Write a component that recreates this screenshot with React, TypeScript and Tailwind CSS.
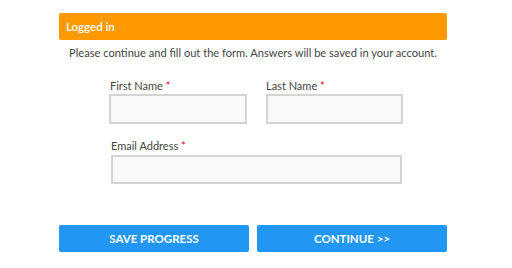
export default function App() {
  return (
    <div className="w-[512px] h-[268px] bg-white pt-[13px] pl-[59px]" style={{ fontFamily: "Lato, 'Open Sans', sans-serif" }}>
      <div className="w-[388px]">
        {/* Status banner */}
        <div className="h-[27px] bg-[#ff9900] rounded-[2px] flex items-center pl-[7px] text-[11.5px] font-semibold text-white">
          Logged in
        </div>
        <p className="mt-[6px] text-center text-[11.1px] leading-[14px] text-[#444]">
          Please continue and fill out the form. Answers will be saved in your account.
        </p>

        {/* Form fields */}
        <div className="ml-[50px] mt-[19px] w-[294px]">
          <div className="flex gap-[19px]">
            <label className="flex flex-col">
              <span className="text-[11px] leading-[14px] text-[#444] pl-[1px]">
                First Name <span className="text-[#e2001a]">*</span>
              </span>
              <input className="mt-[1px] w-[138px] h-[30px] bg-[#f9f9f9] border-2 border-[#d4d4d4]" />
            </label>
            <label className="flex flex-col">
              <span className="text-[11px] leading-[14px] text-[#444]">
                Last Name <span className="text-[#e2001a]">*</span>
              </span>
              <input className="mt-[1px] w-[137px] h-[30px] bg-[#f9f9f9] border-2 border-[#d4d4d4]" />
            </label>
          </div>
          <label className="flex flex-col mt-[15px] pl-[2px]">
            <span className="text-[11px] leading-[14px] text-[#444]">
              Email Address <span className="text-[#e2001a]">*</span>
            </span>
            <input className="mt-[2px] w-[291px] h-[29px] bg-[#f9f9f9] border-2 border-[#d4d4d4]" />
          </label>
        </div>

        {/* Actions */}
        <div className="mt-[41px] flex gap-[8px]">
          <button className="w-[190px] h-[27px] bg-[#2196f3] rounded-[2px] text-white text-[11.5px] font-bold">
            SAVE PROGRESS
          </button>
          <button className="w-[190px] h-[27px] bg-[#2196f3] rounded-[2px] text-white text-[11.5px] font-bold">
            CONTINUE &gt;&gt;
          </button>
        </div>
      </div>
    </div>
  )
}
